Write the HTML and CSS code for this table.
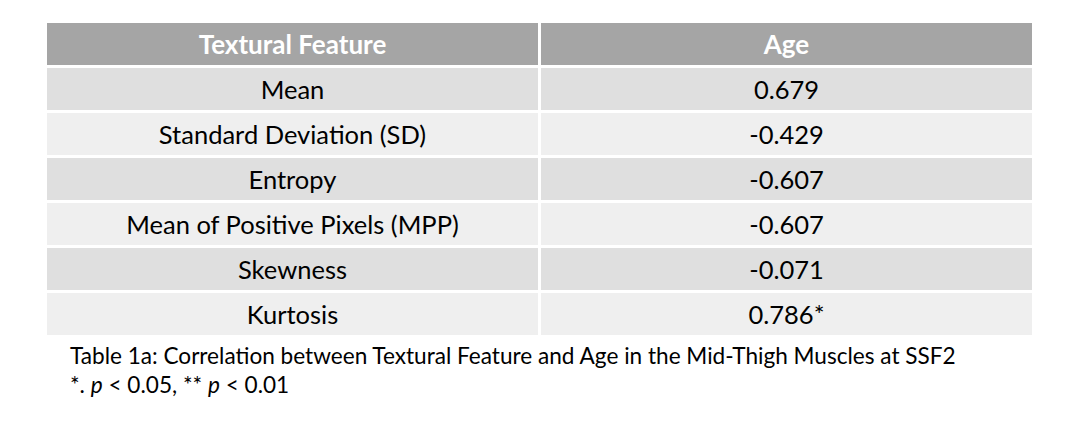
FILE: index.html
```html
<!DOCTYPE html>
<html lang="en">
<head>
<meta charset="utf-8">
<title>Table 1a</title>
<link rel="stylesheet" href="styles.css">
</head>
<body>
<div class="page">
  <div class="table">
    <div class="cell head">Textural Feature</div>
    <div class="cell head">Age</div>
    <div class="cell odd">Mean</div>
    <div class="cell odd">0.679</div>
    <div class="cell even">Standard Deviation (SD)</div>
    <div class="cell even">-0.429</div>
    <div class="cell odd">Entropy</div>
    <div class="cell odd">-0.607</div>
    <div class="cell even">Mean of Positive Pixels (MPP)</div>
    <div class="cell even">-0.607</div>
    <div class="cell odd">Skewness</div>
    <div class="cell odd">-0.071</div>
    <div class="cell even">Kurtosis</div>
    <div class="cell even">0.786*</div>
  </div>
  <div class="caption">
    <div>Table 1a: Correlation between Textural Feature and Age in the Mid-Thigh Muscles at SSF2</div>
    <div>*. <i>p</i> &lt; 0.05, ** <i>p</i> &lt; 0.01</div>
  </div>
</div>
</body>
</html>
```
FILE: styles.css
```css
html, body {
  margin: 0;
  padding: 0;
  background: #ffffff;
}
body {
  font-family: Lato, "Open Sans", sans-serif;
  color: #000000;
  width: 1075px;
  height: 428px;
  overflow: hidden;
}
.page {
  padding: 23px 0 0 47px;
}
.table {
  display: grid;
  grid-template-columns: 491px 491px;
  grid-auto-rows: 42px;
  column-gap: 3px;
  row-gap: 3px;
}
.cell {
  display: flex;
  align-items: center;
  justify-content: center;
  font-size: 25.5px;
}
.head {
  background: #a5a5a5;
  color: #ffffff;
  font-weight: bold;
  font-size: 26px;
}
.odd {
  background: #dfdfdf;
}
.even {
  background: #efefef;
}
.caption {
  padding: 6px 0 0 23px;
  font-size: 22.6px;
  line-height: 29px;
}
```
